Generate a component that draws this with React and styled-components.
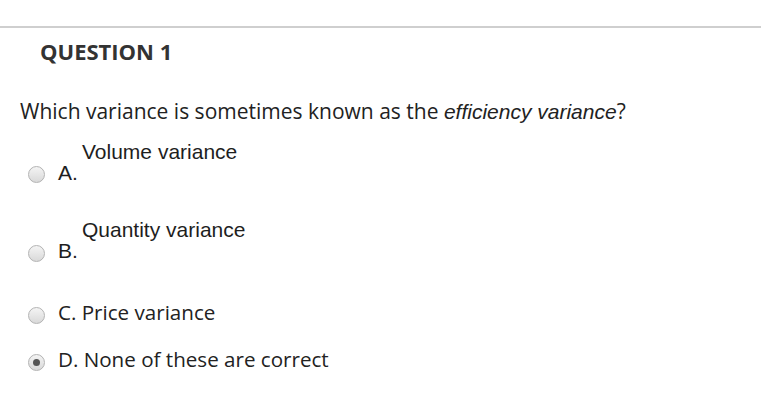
import React from "react";
import styled, { createGlobalStyle } from "styled-components";

const Global = createGlobalStyle`
  html, body { margin: 0; padding: 0; background: #fff; }
  body { font-family: "Open Sans", sans-serif; color: #222; }
`;

const Page = styled.div`
  width: 762px;
  height: 418px;
  padding-top: 26px;
  box-sizing: border-box;
  overflow: hidden;
`;

const Rule = styled.hr`
  margin: 0;
  border: 0;
  height: 2px;
  width: 761px;
  background: #cfcfcf;
`;

const Title = styled.h2`
  margin: 8px 0 0 40px;
  font-family: "Open Sans", sans-serif;
  font-weight: 700;
  font-size: 22px;
  line-height: 30px;
  color: #333;
`;

const Prompt = styled.p`
  margin: 31px 0 0 20px;
  font-size: 21px;
  line-height: 28px;
  color: #222;
  em {
    font-family: "Liberation Sans", Arial, sans-serif;
    font-size: 21px;
  }
`;

const Options = styled.div`
  margin: 15px 0 0 28px;
  display: flex;
  flex-direction: column;
`;

const Option = styled.label`
  display: flex;
  align-items: flex-start;
  gap: 13px;
  margin-bottom: ${(p) => p.$mb}px;
`;

const Radio = styled.span`
  flex: none;
  width: 17px;
  height: 17px;
  margin-top: ${(p) => p.$offset}px;
  border-radius: 50%;
  box-sizing: border-box;
  border: 1px solid #b3b3b3;
  background: linear-gradient(#f4f4f4, #d9d9d9);
  display: flex;
  align-items: center;
  justify-content: center;
  &::after {
    content: "";
    display: ${(p) => (p.$checked ? "block" : "none")};
    width: 7px;
    height: 7px;
    border-radius: 50%;
    background: #555;
  }
`;

const Stack = styled.div`
  display: flex;
  flex-direction: column;
  font-family: "Liberation Sans", Arial, sans-serif;
  font-size: 21px;
  line-height: 21px;
  color: #1e1e1e;
`;

const Answer = styled.span`
  padding-left: 24px;
`;

const Letter = styled.span``;

const Inline = styled.span`
  font-size: 20.6px;
  line-height: 28px;
  color: #222;
`;

export default function App() {
  return (
    <>
      <Global />
      <Page>
        <Rule />
        <Title>QUESTION 1</Title>
        <Prompt>
          Which variance is sometimes known as the <em>efficiency variance</em>?
        </Prompt>
        <Options>
          <Option $mb={36}>
            <Radio $offset={25} />
            <Stack>
              <Answer>Volume variance</Answer>
              <Letter>A.</Letter>
            </Stack>
          </Option>
          <Option $mb={36}>
            <Radio $offset={26} />
            <Stack>
              <Answer>Quantity variance</Answer>
              <Letter>B.</Letter>
            </Stack>
          </Option>
          <Option $mb={19}>
            <Radio $offset={9} />
            <Inline>C. Price variance</Inline>
          </Option>
          <Option $mb={0}>
            <Radio $offset={9} $checked />
            <Inline>D. None of these are correct</Inline>
          </Option>
        </Options>
      </Page>
    </>
  );
}
